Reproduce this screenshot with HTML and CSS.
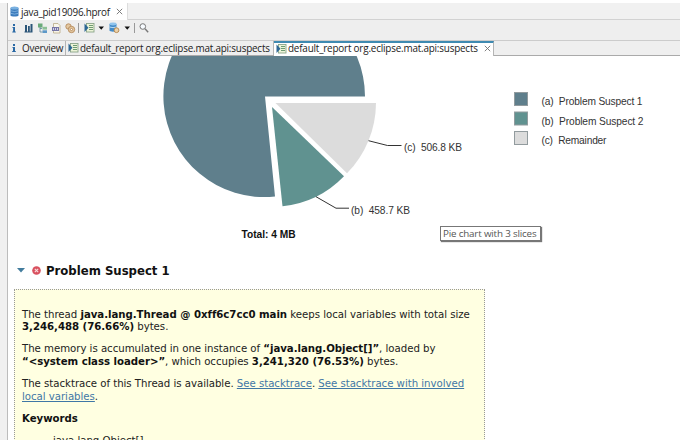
FILE: index.html
```html
<!DOCTYPE html>
<html lang="en">
<head>
<meta charset="utf-8">
<title>java_pid19096.hprof</title>
<link rel="stylesheet" href="styles.css">
</head>
<body>
<div class="window">
  <aside class="sash"></aside>
  <main class="editor">
    <header class="file-tabs">
      <div class="file-tab">
        <svg class="ico" width="9" height="11" viewBox="0 0 9 11"><path d="M.5 2v7.500c0 1.400 8 1.400 8 0V2z" fill="#3c7cbd"/><ellipse cx="4.500" cy="2" rx="4" ry="1.500" fill="#79b0e0"/><path d="M.5 4.700q4 1.700 8 0M.5 7.300q4 1.700 8 0" stroke="#8dbbe5" stroke-width=".8" fill="none"/></svg>
        <span class="file-name">java_pid19096.hprof</span>
        <svg class="close" width="7" height="7" viewBox="0 0 7 7"><path d="M.8 .8l5.400 5.400M6.200 .8l-5.400 5.400"/></svg>
      </div>
    </header>
    <div class="toolbar">
      <svg width="160" height="20" viewBox="0 0 160 20">
        <g fill="#2a69a5"><rect x="5" y="4" width="2" height="2"/><path d="M4.500 7H7v4.500h.8v1H4.300v-1h.8V8h-.6z"/></g>
        <g fill="#2b5578"><path d="M17 5h2v7h-2zM20 6h1.800v6H20zM22.500 4h2v8h-2zM16.500 11.500h8v1h-8z"/></g>
        <g><rect x="30" y="3.500" width="4.500" height="4" fill="#6aaa7a"/><rect x="34.500" y="6.800" width="4.500" height="2.800" fill="#8cc096"/><rect x="34.500" y="10.300" width="4.500" height="2.700" fill="#5d98c8"/><path d="M32 7v5h2.500M32 8.500h2" stroke="#5e879b" stroke-width=".8" fill="none"/></g>
        <g><path d="M45.500 3.500h4.500l2 2v7.500h-6.500z" fill="#f8f5ea" stroke="#b9a986" stroke-width=".8"/><rect x="44" y="7" width="7" height="4" fill="#7776a5"/><path d="M45.500 8v2M47.500 8v2M49.500 8v2" stroke="#e8e8f5" stroke-width=".8"/></g>
        <g fill="#e4c8a0" stroke="#b48a5c" stroke-width=".9"><circle cx="60.500" cy="6.500" r="2.700"/><circle cx="63.500" cy="9.500" r="3.200"/><circle cx="63.500" cy="9.500" r="1.100" fill="#fff"/></g>
        <path d="M70.500 3v10M126.500 3v10" stroke="#999"/>
        <g id="report"><rect x="78.500" y="3.500" width="7.500" height="8.500" fill="#edf4d8" stroke="#8aa58a" stroke-width=".9"/><path d="M81 5.500h4M81 7.500h4M81 9.500h4" stroke="#6d9b72"/><path d="M76.500 3.500v8.500l4-4.200z" fill="#2d6794"/></g>
        <path d="M90.500 6.500h5.500l-2.750 3.300zM116.500 6.500h5.500l-2.750 3.300z" fill="#111"/>
        <g><path d="M101.500 4v6.500c0 1.500 7 1.500 7 0V4z" fill="#438bc8"/><ellipse cx="105" cy="4" rx="3.500" ry="1.400" fill="#90c4ed"/><path d="M101.500 7q3.500 1.300 7 0" stroke="#b9dcf5" fill="none"/><circle cx="108.500" cy="10.200" r="2.400" fill="#ead2ac" stroke="#b48448" stroke-width=".9"/></g>
        <g fill="none" stroke="#777"><circle cx="134.800" cy="6.500" r="2.800" fill="#f7fbff"/><path d="M137 8.800l3.200 3.400" stroke-width="1.400"/></g>
      </svg>
    </div>
    <nav class="page-tabs">
      <div class="page-tab overview"><svg width="4" height="10" viewBox="0 0 4 10"><path d="M1 1h2v2H1zM.5 4H3v4h.8v1H.2V8H1V5H.5z" fill="#2a69a5"/></svg><span>Overview</span></div>
      <div class="page-tab report"><svg width="11" height="10" viewBox="76 3 11 10"><use href="#report"/></svg><span>default_report org.eclipse.mat.api:suspects</span></div>
      <div class="page-tab report active"><svg width="11" height="10" viewBox="76 3 11 10"><use href="#report"/></svg><span>default_report org.eclipse.mat.api:suspects</span><svg class="close" width="7" height="7" viewBox="0 0 7 7"><path d="M.8 .8l5.400 5.400M6.200 .8l-5.400 5.400"/></svg></div>
    </nav>
    <section class="chart">
      <svg width="672" height="200" viewBox="8 56 672 200" role="img" aria-label="Pie chart with 3 slices">
        <path d="M265 96.500H365A100.800 100.800 0 1 0 275 196.500z" fill="#5f7f8c"/>
        <path d="M275.500 103H376A101 101 0 0 1 347 173.300z" fill="#dcdcdc"/>
        <path d="M272 107L344 176.300A100 100 0 0 1 282.500 206.300z" fill="#609290"/>
        <path d="M368.500 140.700l19 4.800h14M316 196.700l20 11.500h13" fill="none" stroke="#333"/>
        <g class="label">
          <text x="404" y="151" textLength="58">(c)&#160; 506.8 KB</text>
          <text x="351" y="213.500" textLength="59">(b)&#160; 458.7 KB</text>
          <text x="541.500" y="105" textLength="101">(a)&#160; Problem Suspect 1</text>
          <text x="541.500" y="125" textLength="102">(b)&#160; Problem Suspect 2</text>
          <text x="541.500" y="144" textLength="65">(c)&#160; Remainder</text>
        </g>
        <text class="total" x="241.500" y="237.500" textLength="54">Total: 4 MB</text>
        <g stroke="#929b9e"><rect x="514.500" y="92.500" width="13" height="13" fill="#5f7f8c"/><rect x="514.500" y="112" width="13" height="13" fill="#609290"/><rect x="514.500" y="131.500" width="13" height="13" fill="#dcdcdc"/></g>
      </svg>
      <div class="tooltip">Pie chart with 3 slices</div>
    </section>
    <h2 class="heading">
      <svg width="8" height="5" viewBox="0 0 8 5"><path d="M0 0h8L4 4.500z" fill="#427c9d"/></svg>
      <svg class="error" width="9" height="9" viewBox="0 0 9 9"><circle cx="4.500" cy="4.500" r="4.300" fill="#d9515f"/><path d="M2.800 2.800l3.400 3.400M6.200 2.800L2.800 6.200" stroke="#f8dede" stroke-width="1.100"/></svg>
      <span>Problem Suspect 1</span>
    </h2>
    <article class="suspect">
      <p>The thread <b>java.lang.Thread @ 0xff6c7cc0 main</b> keeps local variables with total size<br><b>3,246,488 (76.66%)</b> bytes.</p>
      <p>The memory is accumulated in one instance of <b>“java.lang.Object[]”</b>, loaded by<br><b>“&lt;system class loader&gt;”</b>, which occupies <b>3,241,320 (76.53%)</b> bytes.</p>
      <p>The stacktrace of this Thread is available. <a>See stacktrace</a>. <a>See stacktrace with involved<br>local variables</a>.</p>
      <p><b>Keywords</b></p>
      <p class="keyword">java.lang.Object[]</p>
    </article>
  </main>
</div>
</body>
</html>
```
FILE: styles.css
```css
* { box-sizing: border-box; }
body { margin: 0; width: 684px; height: 444px; overflow: hidden; background: #fff; color: #222; }
svg { display: block; flex: none; }
.window { display: flex; width: 680px; height: 440px; padding-top: 3px; overflow: hidden; }
.sash { width: 8px; flex: none; background: #f0f0f0; border-right: 1px solid #bcbcbc; }
.editor { width: 672px; min-width: 0; display: flex; flex-direction: column; font-family: "Open Sans", sans-serif; font-size: 9.900px; }
.editor > * { flex: none; }
.file-tabs { height: 17px; background: #f1f1f1; border-bottom: 1px solid #d2d2d2; display: flex; }
.file-tab { display: flex; align-items: center; width: 120px; height: 17px; padding-left: 2px; background: #fff; border-right: 1px solid #ddd; white-space: nowrap; }
.file-name { margin-left: 2px; width: 90px; letter-spacing: -.25px; line-height: 16px; }
.close { stroke: #707070; fill: none; stroke-width: .9; margin-left: 5px; }
.toolbar { height: 21px; background: #eee; border-bottom: 1px solid #ccc; }
.page-tabs { height: 15px; display: flex; background: #efefef; border-bottom: 1px solid #aaa; }
.page-tab { display: flex; align-items: center; height: 14px; white-space: nowrap; border-right: 1px solid #b5b5b5; line-height: 14px; letter-spacing: -.19px; }
.overview { width: 58px; padding-left: 4px; gap: 6px; letter-spacing: -.2px; }
.report { width: 208px; padding-left: 2px; gap: 1px; }
.active { width: 220px; height: 15px; padding-bottom: 2px; background: #fff; border-top: 2px solid #3f8ab1; line-height: 11px; }
.chart { height: 200px; position: relative; }
.label, .total { font-family: "Liberation Sans", sans-serif; font-size: 10.200px; fill: #333; white-space: pre; }
.total { font-weight: bold; fill: #111; }
.tooltip { position: absolute; left: 432px; top: 170px; width: 101px; height: 15px; border: 1px solid #777; background: #fff; box-shadow: 1px 1px 1px #777; color: #555; font-size: 9.800px; letter-spacing: -.17px; line-height: 13px; padding-left: 2px; white-space: nowrap; }
.heading { display: flex; align-items: center; height: 33px; margin: 0; padding: 0 0 4px 9px; font: bold 11.700px/20px "DejaVu Sans", sans-serif; color: #111; }
.error { margin: 0 5px 0 7px; }
.suspect { width: 471px; height: 180px; margin-left: 6px; background: #ffffe1; border: 1px dotted #999; padding: 18.800px 0 0 7px; font-family: "DejaVu Sans", sans-serif; font-size: 10.200px; letter-spacing: -.035px; line-height: 12.500px; white-space: nowrap; }
.suspect p { margin: 0 0 9.700px; }
.suspect b { color: #111; }
.suspect a { color: #3f77a6; text-decoration: underline; }
.suspect .keyword { margin-left: 31px; }
```
